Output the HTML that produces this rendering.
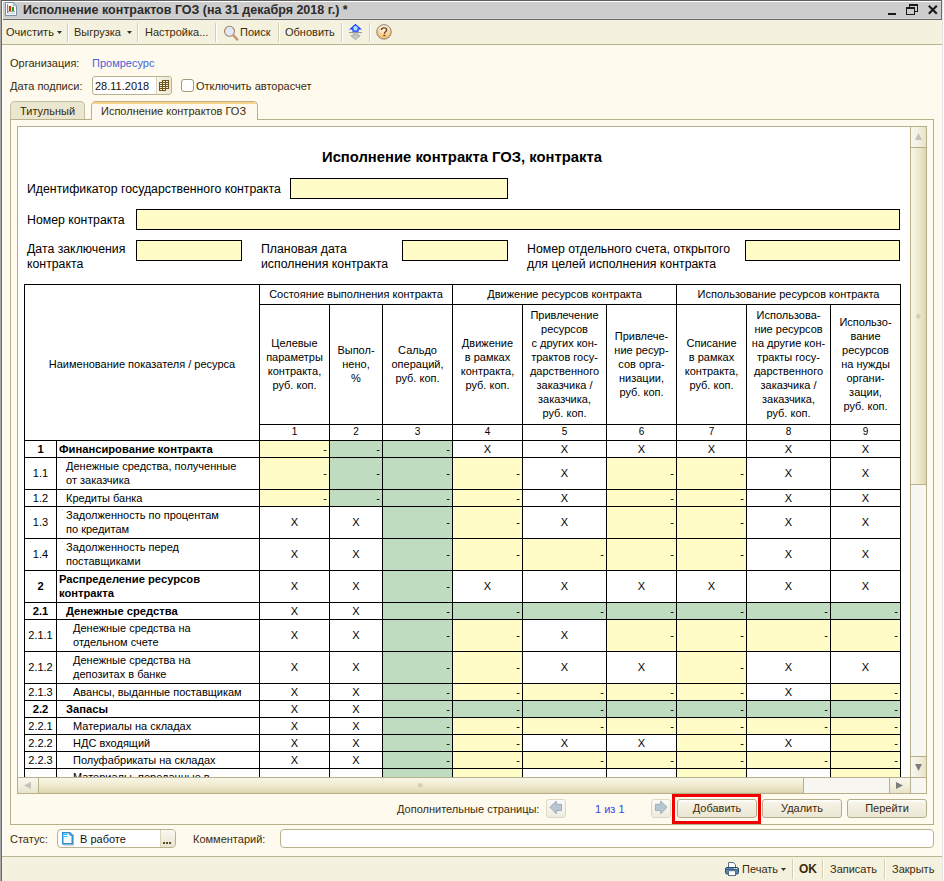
<!DOCTYPE html>
<html><head><meta charset="utf-8">
<style>
*{margin:0;padding:0;box-sizing:border-box}
html,body{width:944px;height:881px;overflow:hidden}
body{position:relative;background:#fefaee;font-family:"Liberation Sans",sans-serif;font-size:11px;color:#3a2c0c}
.a{position:absolute}
.t{position:absolute;white-space:nowrap;line-height:13px}
.sep{position:absolute;width:2px;border-left:1px solid #d5d0b5;border-right:1px solid #fff}
.btn{position:absolute;height:19px;border:1px solid #b4ad8c;border-radius:3px;background:linear-gradient(#fff 0,#fff 1px,#f6f3e8 2px,#ebe6d3);text-align:center;line-height:16px;color:#3a2c0c}
</style></head><body>
<!-- window frame -->
<div class="a" style="left:0;top:0;width:942px;height:1px;background:#5d5d5d"></div>
<div class="a" style="left:0;top:1px;width:942px;height:1px;background:#fff"></div>
<div class="a" style="left:0;top:2px;width:942px;height:17px;background:#cdcdcd"></div>
<div class="a" style="left:0;top:19px;width:942px;height:1px;background:#6a6a6a"></div>
<div class="a" style="left:941px;top:0;width:1px;height:20px;background:#6a6a6a"></div>
<div class="a" style="left:942px;top:0;width:1px;height:881px;background:#e6e6e6"></div>
<div class="a" style="left:943px;top:0;width:1px;height:881px;background:#fff"></div>
<div class="a" style="left:0;top:0;width:1px;height:881px;background:#a8a8a8"></div>
<div class="a" style="left:1px;top:0;width:1px;height:881px;background:#6a6a6a"></div>
<div class="a" style="left:2px;top:1px;width:1px;height:880px;background:#fffef6"></div>
<div class="a" style="left:3px;top:18px;width:938px;height:1px;background:#d6d6d6"></div>
<!-- title icon -->
<svg class="a" style="left:5px;top:2px" width="12" height="14" viewBox="0 0 12 14">
<path d="M0.5 0.5H8.2L11.5 3.8V13.5H0.5Z" fill="#fff" stroke="#7890a8"/>
<path d="M8.2 0.5V3.8H11.5Z" fill="#d4e2ee" stroke="#8aa0b4" stroke-width="0.8"/>
<rect x="2.2" y="2.2" width="0.9" height="9" fill="#666"/>
<rect x="3.9" y="4" width="2.2" height="5.3" fill="#e82a10"/>
<rect x="6.9" y="5" width="2.1" height="4.3" fill="#22a020"/>
<rect x="2" y="9.3" width="8" height="0.8" fill="#8a8a8a"/>
<rect x="2" y="10.9" width="8" height="1" fill="#bcd6ee"/></svg>
<div class="t" style="left:23px;top:3px;font-size:12.5px;font-weight:bold;color:#2b2b2b;line-height:14px">Исполнение контрактов ГОЗ (на 31 декабря 2018 г.) *</div>
<!-- window controls -->
<div class="a" style="left:888px;top:13px;width:8px;height:2px;background:#1a1a1a"></div>
<div class="a" style="left:909px;top:4px;width:9px;height:8px;border:1px solid #1a1a1a;border-top-width:2px"></div>
<div class="a" style="left:906px;top:7px;width:9px;height:8px;border:1px solid #1a1a1a;border-top-width:2px;background:#cdcdcd"></div>
<svg class="a" style="left:927px;top:4px" width="12" height="12" viewBox="0 0 12 12"><path d="M1.8 1.8L9.8 9.8M9.8 1.8L1.8 9.8" stroke="#1a1a1a" stroke-width="2.1"/></svg>
<!-- toolbar -->
<div class="a" style="left:2px;top:20px;width:940px;height:24px;background:#f4f1df"></div>
<div class="a" style="left:2px;top:44px;width:940px;height:1px;background:#b9b28e"></div>
<div class="t" style="left:6px;top:26px">Очистить</div>
<svg class="a" style="left:57px;top:31px" width="6" height="3"><path d="M0 0H5L2.5 3Z" fill="#333"/></svg>
<div class="sep" style="left:67px;top:23px;height:19px"></div>
<div class="t" style="left:74px;top:26px">Выгрузка</div>
<svg class="a" style="left:127px;top:31px" width="6" height="3"><path d="M0 0H5L2.5 3Z" fill="#333"/></svg>
<div class="sep" style="left:137px;top:23px;height:19px"></div>
<div class="t" style="left:145px;top:26px">Настройка...</div>
<div class="sep" style="left:215px;top:23px;height:19px"></div>
<svg class="a" style="left:222px;top:24px" width="17" height="17" viewBox="0 0 17 17">
<circle cx="7.5" cy="7.3" r="5" fill="#dfe9fa" stroke="#a8805e" stroke-width="1.1"/>
<path d="M11.6 11.6L15.2 15.3" stroke="#c39a78" stroke-width="2.6" stroke-linecap="round"/></svg>
<div class="t" style="left:240px;top:26px">Поиск</div>
<div class="sep" style="left:278px;top:23px;height:19px"></div>
<div class="t" style="left:285px;top:26px">Обновить</div>
<div class="sep" style="left:341px;top:23px;height:19px"></div>
<svg class="a" style="left:349px;top:23px" width="14" height="18" viewBox="0 0 14 18">
<path d="M6.5 1.6L11.3 5.9H9V8.2H4V5.9H1.7Z" fill="#a8e4ff" stroke="#1438ff" stroke-width="1.2" stroke-linejoin="miter"/>
<rect x="0" y="9" width="13" height="1.1" fill="#9a9a9a"/>
<path d="M4.2 10.8H8.8V12.6H11.2L6.5 16.8L1.8 12.6H4.2Z" fill="#c6c6c6" stroke="#9a9a9a" stroke-width="0.7"/></svg>
<div class="sep" style="left:369px;top:23px;height:19px"></div>
<svg class="a" style="left:376px;top:24px" width="16" height="16" viewBox="0 0 16 16">
<defs><radialGradient id="hg" cx="0.5" cy="0.32" r="0.75"><stop offset="0" stop-color="#fffbf2"/><stop offset="0.45" stop-color="#fbdcaa"/><stop offset="1" stop-color="#f2a43a"/></radialGradient></defs>
<circle cx="8" cy="7.9" r="7.3" fill="url(#hg)" stroke="#7c808a" stroke-width="0.9"/>
<path d="M5.4 6.1C5.4 4.5 6.6 3.9 8 3.9C9.6 3.9 10.6 4.8 10.6 6C10.6 7.4 9.1 7.8 8.6 8.9L8.4 9.9" fill="none" stroke="#6e4420" stroke-width="1.4"/>
<rect x="7.3" y="10.8" width="2.1" height="1.3" fill="#6e4420"/></svg>

<!-- header fields -->
<div class="t" style="left:10px;top:57px">Организация:</div>
<div class="t" style="left:92px;top:57px;color:#4464d8">Промресурс</div>
<div class="t" style="left:10px;top:80px">Дата подписи:</div>
<div class="a" style="left:92px;top:76px;width:80px;height:19px;border:1px solid #b9b28e;border-radius:3px;background:#fff"></div>
<div class="a" style="left:156px;top:77px;width:15px;height:17px;border-left:1px solid #d8d3bb;background:linear-gradient(90deg,#f7f5ea,#ebe6d2);border-radius:0 2px 2px 0"></div>
<svg class="a" style="left:159px;top:80px" width="10" height="11" viewBox="0 0 10 11"><path d="M3 0H10V9H7V11H0V2H3Z" fill="#6e5418"/><rect x="4" y="1" width="2" height="1" fill="#f4eedc"/><rect x="7" y="1" width="2" height="1" fill="#f4eedc"/><rect x="1" y="3" width="2" height="1" fill="#f4eedc"/><rect x="4" y="3" width="2" height="1" fill="#f4eedc"/><rect x="7" y="3" width="2" height="1" fill="#f4eedc"/><rect x="1" y="5" width="2" height="1" fill="#f4eedc"/><rect x="4" y="5" width="2" height="1" fill="#f4eedc"/><rect x="7" y="5" width="2" height="1" fill="#f4eedc"/><rect x="1" y="7" width="2" height="1" fill="#f4eedc"/><rect x="4" y="7" width="2" height="1" fill="#f4eedc"/><rect x="7" y="7" width="2" height="1" fill="#f4eedc"/><rect x="1" y="9" width="2" height="1" fill="#f4eedc"/><rect x="4" y="9" width="2" height="1" fill="#f4eedc"/></svg>
<div class="t" style="left:95px;top:80px;color:#111">28.11.2018</div>
<div class="a" style="left:181px;top:79px;width:13px;height:13px;border:1px solid #a09a78;border-radius:3px;background:#fff"></div>
<div class="t" style="left:196px;top:80px">Отключить авторасчет</div>

<!-- tabs -->
<div class="a" style="left:10px;top:101px;width:75px;height:19px;border:1px solid #c5bf9f;border-bottom:none;border-radius:5px 5px 0 0;background:#ebe6d0"></div>
<div class="t" style="left:20px;top:105px">Титульный</div>
<div class="a" style="left:91px;top:101px;width:167px;height:19px;border:1px solid #b8b08a;border-bottom:none;border-radius:5px 5px 0 0;background:#fdf9ee"></div>
<div class="a" style="left:93px;top:102px;width:163px;height:2px;background:#f8d48a;border-radius:3px 3px 0 0"></div>
<div class="t" style="left:101px;top:105px">Исполнение контрактов ГОЗ</div>

<!-- tab page -->
<div id="page" class="a" style="left:10px;top:119px;width:924px;height:706px;border:1px solid #b8b08a;border-top:none"></div>
<div class="a" style="left:10px;top:119px;width:82px;height:1px;background:#b8b08a"></div>
<div class="a" style="left:257px;top:119px;width:677px;height:1px;background:#b8b08a"></div>

<!-- spreadsheet frame -->
<div id="ss" class="a" style="left:17px;top:126px;width:910px;height:668px;border:1px solid #b8b08a;background:#fff;overflow:hidden">
<div class="a" style="left:-18px;top:-127px;width:944px;height:881px;color:#000">
<!--SS-->
<div class="t" style="left:322px;top:149px;font-size:14.8px;font-weight:bold;color:#000;line-height:17px">Исполнение контракта ГОЗ, контракта</div>
<div class="t" style="left:27px;top:182px;font-size:12.3px;color:#000;line-height:15px">Идентификатор государственного контракта</div>
<div class="a" style="left:290px;top:178px;width:218px;height:21px;border:1px solid #000;background:#fffcc8"></div>
<div class="t" style="left:27px;top:213px;font-size:12.3px;color:#000;line-height:15px">Номер контракта</div>
<div class="a" style="left:136px;top:209px;width:764px;height:21px;border:1px solid #000;background:#fffcc8"></div>
<div class="t" style="left:27px;top:242px;font-size:12.3px;color:#000;line-height:15px">Дата заключения<br>контракта</div>
<div class="a" style="left:136px;top:240px;width:106px;height:21px;border:1px solid #000;background:#fffcc8"></div>
<div class="t" style="left:261px;top:242px;font-size:12.3px;color:#000;line-height:15px">Плановая дата<br>исполнения контракта</div>
<div class="a" style="left:402px;top:240px;width:106px;height:21px;border:1px solid #000;background:#fffcc8"></div>
<div class="t" style="left:527px;top:242px;font-size:12.3px;color:#000;line-height:15px">Номер отдельного счета, открытого<br>для целей исполнения контракта</div>
<div class="a" style="left:745px;top:240px;width:155px;height:21px;border:1px solid #000;background:#fffcc8"></div>
<div class="a" style="left:260px;top:441px;width:69px;height:16px;background:#fffcc8"></div>
<div class="a" style="left:330px;top:441px;width:52px;height:16px;background:#c0dcc0"></div>
<div class="a" style="left:383px;top:441px;width:69px;height:16px;background:#c0dcc0"></div>
<div class="a" style="left:260px;top:458px;width:69px;height:31px;background:#fffcc8"></div>
<div class="a" style="left:330px;top:458px;width:52px;height:31px;background:#c0dcc0"></div>
<div class="a" style="left:383px;top:458px;width:69px;height:31px;background:#c0dcc0"></div>
<div class="a" style="left:453px;top:458px;width:69px;height:31px;background:#fffcc8"></div>
<div class="a" style="left:607px;top:458px;width:69px;height:31px;background:#fffcc8"></div>
<div class="a" style="left:677px;top:458px;width:69px;height:31px;background:#fffcc8"></div>
<div class="a" style="left:260px;top:490px;width:69px;height:16px;background:#fffcc8"></div>
<div class="a" style="left:330px;top:490px;width:52px;height:16px;background:#c0dcc0"></div>
<div class="a" style="left:383px;top:490px;width:69px;height:16px;background:#c0dcc0"></div>
<div class="a" style="left:453px;top:490px;width:69px;height:16px;background:#fffcc8"></div>
<div class="a" style="left:607px;top:490px;width:69px;height:16px;background:#fffcc8"></div>
<div class="a" style="left:677px;top:490px;width:69px;height:16px;background:#fffcc8"></div>
<div class="a" style="left:383px;top:507px;width:69px;height:31px;background:#c0dcc0"></div>
<div class="a" style="left:453px;top:507px;width:69px;height:31px;background:#fffcc8"></div>
<div class="a" style="left:607px;top:507px;width:69px;height:31px;background:#fffcc8"></div>
<div class="a" style="left:677px;top:507px;width:69px;height:31px;background:#fffcc8"></div>
<div class="a" style="left:383px;top:539px;width:69px;height:31px;background:#c0dcc0"></div>
<div class="a" style="left:453px;top:539px;width:69px;height:31px;background:#fffcc8"></div>
<div class="a" style="left:523px;top:539px;width:83px;height:31px;background:#fffcc8"></div>
<div class="a" style="left:607px;top:539px;width:69px;height:31px;background:#fffcc8"></div>
<div class="a" style="left:677px;top:539px;width:69px;height:31px;background:#fffcc8"></div>
<div class="a" style="left:383px;top:571px;width:69px;height:31px;background:#c0dcc0"></div>
<div class="a" style="left:383px;top:603px;width:69px;height:16px;background:#c0dcc0"></div>
<div class="a" style="left:453px;top:603px;width:69px;height:16px;background:#c0dcc0"></div>
<div class="a" style="left:523px;top:603px;width:83px;height:16px;background:#c0dcc0"></div>
<div class="a" style="left:607px;top:603px;width:69px;height:16px;background:#c0dcc0"></div>
<div class="a" style="left:677px;top:603px;width:69px;height:16px;background:#c0dcc0"></div>
<div class="a" style="left:747px;top:603px;width:83px;height:16px;background:#c0dcc0"></div>
<div class="a" style="left:831px;top:603px;width:69px;height:16px;background:#c0dcc0"></div>
<div class="a" style="left:383px;top:620px;width:69px;height:31px;background:#c0dcc0"></div>
<div class="a" style="left:453px;top:620px;width:69px;height:31px;background:#fffcc8"></div>
<div class="a" style="left:607px;top:620px;width:69px;height:31px;background:#fffcc8"></div>
<div class="a" style="left:677px;top:620px;width:69px;height:31px;background:#fffcc8"></div>
<div class="a" style="left:747px;top:620px;width:83px;height:31px;background:#fffcc8"></div>
<div class="a" style="left:831px;top:620px;width:69px;height:31px;background:#fffcc8"></div>
<div class="a" style="left:383px;top:652px;width:69px;height:31px;background:#c0dcc0"></div>
<div class="a" style="left:453px;top:652px;width:69px;height:31px;background:#fffcc8"></div>
<div class="a" style="left:677px;top:652px;width:69px;height:31px;background:#fffcc8"></div>
<div class="a" style="left:383px;top:684px;width:69px;height:16px;background:#c0dcc0"></div>
<div class="a" style="left:453px;top:684px;width:69px;height:16px;background:#fffcc8"></div>
<div class="a" style="left:523px;top:684px;width:83px;height:16px;background:#fffcc8"></div>
<div class="a" style="left:607px;top:684px;width:69px;height:16px;background:#fffcc8"></div>
<div class="a" style="left:677px;top:684px;width:69px;height:16px;background:#fffcc8"></div>
<div class="a" style="left:831px;top:684px;width:69px;height:16px;background:#fffcc8"></div>
<div class="a" style="left:383px;top:701px;width:69px;height:16px;background:#c0dcc0"></div>
<div class="a" style="left:453px;top:701px;width:69px;height:16px;background:#c0dcc0"></div>
<div class="a" style="left:523px;top:701px;width:83px;height:16px;background:#c0dcc0"></div>
<div class="a" style="left:607px;top:701px;width:69px;height:16px;background:#c0dcc0"></div>
<div class="a" style="left:677px;top:701px;width:69px;height:16px;background:#c0dcc0"></div>
<div class="a" style="left:747px;top:701px;width:83px;height:16px;background:#c0dcc0"></div>
<div class="a" style="left:831px;top:701px;width:69px;height:16px;background:#c0dcc0"></div>
<div class="a" style="left:383px;top:718px;width:69px;height:16px;background:#c0dcc0"></div>
<div class="a" style="left:453px;top:718px;width:69px;height:16px;background:#fffcc8"></div>
<div class="a" style="left:523px;top:718px;width:83px;height:16px;background:#fffcc8"></div>
<div class="a" style="left:607px;top:718px;width:69px;height:16px;background:#fffcc8"></div>
<div class="a" style="left:677px;top:718px;width:69px;height:16px;background:#fffcc8"></div>
<div class="a" style="left:747px;top:718px;width:83px;height:16px;background:#fffcc8"></div>
<div class="a" style="left:831px;top:718px;width:69px;height:16px;background:#fffcc8"></div>
<div class="a" style="left:383px;top:735px;width:69px;height:16px;background:#c0dcc0"></div>
<div class="a" style="left:453px;top:735px;width:69px;height:16px;background:#fffcc8"></div>
<div class="a" style="left:677px;top:735px;width:69px;height:16px;background:#fffcc8"></div>
<div class="a" style="left:831px;top:735px;width:69px;height:16px;background:#fffcc8"></div>
<div class="a" style="left:383px;top:752px;width:69px;height:16px;background:#c0dcc0"></div>
<div class="a" style="left:453px;top:752px;width:69px;height:16px;background:#fffcc8"></div>
<div class="a" style="left:523px;top:752px;width:83px;height:16px;background:#fffcc8"></div>
<div class="a" style="left:607px;top:752px;width:69px;height:16px;background:#fffcc8"></div>
<div class="a" style="left:677px;top:752px;width:69px;height:16px;background:#fffcc8"></div>
<div class="a" style="left:747px;top:752px;width:83px;height:16px;background:#fffcc8"></div>
<div class="a" style="left:831px;top:752px;width:69px;height:16px;background:#fffcc8"></div>
<div class="a" style="left:383px;top:769px;width:69px;height:31px;background:#c0dcc0"></div>
<div class="a" style="left:453px;top:769px;width:69px;height:31px;background:#fffcc8"></div>
<div class="a" style="left:677px;top:769px;width:69px;height:31px;background:#fffcc8"></div>
<div class="a" style="left:831px;top:769px;width:69px;height:31px;background:#fffcc8"></div>
<div class="a" style="left:24px;top:284px;width:877px;height:1px;background:#000"></div>
<div class="a" style="left:259px;top:304px;width:642px;height:1px;background:#000"></div>
<div class="a" style="left:259px;top:424px;width:642px;height:1px;background:#000"></div>
<div class="a" style="left:24px;top:440px;width:877px;height:1px;background:#000"></div>
<div class="a" style="left:24px;top:457px;width:877px;height:1px;background:#000"></div>
<div class="a" style="left:24px;top:489px;width:877px;height:1px;background:#000"></div>
<div class="a" style="left:24px;top:506px;width:877px;height:1px;background:#000"></div>
<div class="a" style="left:24px;top:538px;width:877px;height:1px;background:#000"></div>
<div class="a" style="left:24px;top:570px;width:877px;height:1px;background:#000"></div>
<div class="a" style="left:24px;top:602px;width:877px;height:1px;background:#000"></div>
<div class="a" style="left:24px;top:619px;width:877px;height:1px;background:#000"></div>
<div class="a" style="left:24px;top:651px;width:877px;height:1px;background:#000"></div>
<div class="a" style="left:24px;top:683px;width:877px;height:1px;background:#000"></div>
<div class="a" style="left:24px;top:700px;width:877px;height:1px;background:#000"></div>
<div class="a" style="left:24px;top:717px;width:877px;height:1px;background:#000"></div>
<div class="a" style="left:24px;top:734px;width:877px;height:1px;background:#000"></div>
<div class="a" style="left:24px;top:751px;width:877px;height:1px;background:#000"></div>
<div class="a" style="left:24px;top:768px;width:877px;height:1px;background:#000"></div>
<div class="a" style="left:24px;top:284px;width:1px;height:517px;background:#000"></div>
<div class="a" style="left:900px;top:284px;width:1px;height:517px;background:#000"></div>
<div class="a" style="left:259px;top:284px;width:1px;height:517px;background:#000"></div>
<div class="a" style="left:452px;top:284px;width:1px;height:517px;background:#000"></div>
<div class="a" style="left:676px;top:284px;width:1px;height:517px;background:#000"></div>
<div class="a" style="left:329px;top:304px;width:1px;height:497px;background:#000"></div>
<div class="a" style="left:382px;top:304px;width:1px;height:497px;background:#000"></div>
<div class="a" style="left:522px;top:304px;width:1px;height:497px;background:#000"></div>
<div class="a" style="left:606px;top:304px;width:1px;height:497px;background:#000"></div>
<div class="a" style="left:746px;top:304px;width:1px;height:497px;background:#000"></div>
<div class="a" style="left:830px;top:304px;width:1px;height:497px;background:#000"></div>
<div class="a" style="left:56px;top:440px;width:1px;height:361px;background:#000"></div>
<div class="a" style="left:25px;top:357.0px;width:234px;line-height:14px;text-align:center;">Наименование показателя / ресурса</div>
<div class="a" style="left:260px;top:287.0px;width:192px;line-height:14px;text-align:center;">Состояние выполнения контракта</div>
<div class="a" style="left:453px;top:287.0px;width:223px;line-height:14px;text-align:center;">Движение ресурсов контракта</div>
<div class="a" style="left:677px;top:287.0px;width:223px;line-height:14px;text-align:center;">Использование ресурсов контракта</div>
<div class="a" style="left:260px;top:336.0px;width:69px;line-height:14px;text-align:center;">Целевые<br>параметры<br>контракта,<br>руб. коп.</div>
<div class="a" style="left:260px;top:425.0px;width:69px;line-height:14px;text-align:center;font-size:10px">1</div>
<div class="a" style="left:330px;top:343.0px;width:52px;line-height:14px;text-align:center;">Выпол-<br>нено,<br>%</div>
<div class="a" style="left:330px;top:425.0px;width:52px;line-height:14px;text-align:center;font-size:10px">2</div>
<div class="a" style="left:383px;top:343.0px;width:69px;line-height:14px;text-align:center;">Сальдо<br>операций,<br>руб. коп.</div>
<div class="a" style="left:383px;top:425.0px;width:69px;line-height:14px;text-align:center;font-size:10px">3</div>
<div class="a" style="left:453px;top:336.0px;width:69px;line-height:14px;text-align:center;">Движение<br>в рамках<br>контракта,<br>руб. коп.</div>
<div class="a" style="left:453px;top:425.0px;width:69px;line-height:14px;text-align:center;font-size:10px">4</div>
<div class="a" style="left:523px;top:308.0px;width:83px;line-height:14px;text-align:center;">Привлечение<br>ресурсов<br>с других кон-<br>трактов госу-<br>дарственного<br>заказчика /<br>заказчика,<br>руб. коп.</div>
<div class="a" style="left:523px;top:425.0px;width:83px;line-height:14px;text-align:center;font-size:10px">5</div>
<div class="a" style="left:607px;top:329.0px;width:69px;line-height:14px;text-align:center;">Привлече-<br>ние ресур-<br>сов орга-<br>низации,<br>руб. коп.</div>
<div class="a" style="left:607px;top:425.0px;width:69px;line-height:14px;text-align:center;font-size:10px">6</div>
<div class="a" style="left:677px;top:336.0px;width:69px;line-height:14px;text-align:center;">Списание<br>в рамках<br>контракта,<br>руб. коп.</div>
<div class="a" style="left:677px;top:425.0px;width:69px;line-height:14px;text-align:center;font-size:10px">7</div>
<div class="a" style="left:747px;top:308.0px;width:83px;line-height:14px;text-align:center;">Использова-<br>ние ресурсов<br>на другие кон-<br>тракты госу-<br>дарственного<br>заказчика /<br>заказчика,<br>руб. коп.</div>
<div class="a" style="left:747px;top:425.0px;width:83px;line-height:14px;text-align:center;font-size:10px">8</div>
<div class="a" style="left:831px;top:315.0px;width:69px;line-height:14px;text-align:center;">Использо-<br>вание<br>ресурсов<br>на нужды<br>органи-<br>зации,<br>руб. коп.</div>
<div class="a" style="left:831px;top:425.0px;width:69px;line-height:14px;text-align:center;font-size:10px">9</div>
<div class="a" style="left:25px;top:441.5px;width:31px;line-height:14px;text-align:center;font-weight:bold;font-size:11.2px;">1</div>
<div class="a" style="left:59px;top:441.5px;line-height:14px;white-space:nowrap;font-weight:bold;font-size:11.2px;">Финансирование контракта</div>
<div class="a" style="left:260px;top:441.5px;width:67px;line-height:14px;text-align:right">-</div>
<div class="a" style="left:330px;top:441.5px;width:50px;line-height:14px;text-align:right">-</div>
<div class="a" style="left:383px;top:441.5px;width:67px;line-height:14px;text-align:right">-</div>
<div class="a" style="left:453px;top:441.5px;width:69px;line-height:14px;text-align:center;font-size:11px">X</div>
<div class="a" style="left:523px;top:441.5px;width:83px;line-height:14px;text-align:center;font-size:11px">X</div>
<div class="a" style="left:607px;top:441.5px;width:69px;line-height:14px;text-align:center;font-size:11px">X</div>
<div class="a" style="left:677px;top:441.5px;width:69px;line-height:14px;text-align:center;font-size:11px">X</div>
<div class="a" style="left:747px;top:441.5px;width:83px;line-height:14px;text-align:center;font-size:11px">X</div>
<div class="a" style="left:831px;top:441.5px;width:69px;line-height:14px;text-align:center;font-size:11px">X</div>
<div class="a" style="left:25px;top:466.0px;width:31px;line-height:14px;text-align:center;">1.1</div>
<div class="a" style="left:66px;top:459.0px;line-height:14px;white-space:nowrap;">Денежные средства, полученные<br>от заказчика</div>
<div class="a" style="left:260px;top:466.0px;width:67px;line-height:14px;text-align:right">-</div>
<div class="a" style="left:330px;top:466.0px;width:50px;line-height:14px;text-align:right">-</div>
<div class="a" style="left:383px;top:466.0px;width:67px;line-height:14px;text-align:right">-</div>
<div class="a" style="left:453px;top:466.0px;width:67px;line-height:14px;text-align:right">-</div>
<div class="a" style="left:523px;top:466.0px;width:83px;line-height:14px;text-align:center;font-size:11px">X</div>
<div class="a" style="left:607px;top:466.0px;width:67px;line-height:14px;text-align:right">-</div>
<div class="a" style="left:677px;top:466.0px;width:67px;line-height:14px;text-align:right">-</div>
<div class="a" style="left:747px;top:466.0px;width:83px;line-height:14px;text-align:center;font-size:11px">X</div>
<div class="a" style="left:831px;top:466.0px;width:69px;line-height:14px;text-align:center;font-size:11px">X</div>
<div class="a" style="left:25px;top:490.5px;width:31px;line-height:14px;text-align:center;">1.2</div>
<div class="a" style="left:66px;top:490.5px;line-height:14px;white-space:nowrap;">Кредиты банка</div>
<div class="a" style="left:260px;top:490.5px;width:67px;line-height:14px;text-align:right">-</div>
<div class="a" style="left:330px;top:490.5px;width:50px;line-height:14px;text-align:right">-</div>
<div class="a" style="left:383px;top:490.5px;width:67px;line-height:14px;text-align:right">-</div>
<div class="a" style="left:453px;top:490.5px;width:67px;line-height:14px;text-align:right">-</div>
<div class="a" style="left:523px;top:490.5px;width:83px;line-height:14px;text-align:center;font-size:11px">X</div>
<div class="a" style="left:607px;top:490.5px;width:67px;line-height:14px;text-align:right">-</div>
<div class="a" style="left:677px;top:490.5px;width:67px;line-height:14px;text-align:right">-</div>
<div class="a" style="left:747px;top:490.5px;width:83px;line-height:14px;text-align:center;font-size:11px">X</div>
<div class="a" style="left:831px;top:490.5px;width:69px;line-height:14px;text-align:center;font-size:11px">X</div>
<div class="a" style="left:25px;top:515.0px;width:31px;line-height:14px;text-align:center;">1.3</div>
<div class="a" style="left:66px;top:508.0px;line-height:14px;white-space:nowrap;">Задолженность по процентам<br>по кредитам</div>
<div class="a" style="left:260px;top:515.0px;width:69px;line-height:14px;text-align:center;font-size:11px">X</div>
<div class="a" style="left:330px;top:515.0px;width:52px;line-height:14px;text-align:center;font-size:11px">X</div>
<div class="a" style="left:383px;top:515.0px;width:67px;line-height:14px;text-align:right">-</div>
<div class="a" style="left:453px;top:515.0px;width:67px;line-height:14px;text-align:right">-</div>
<div class="a" style="left:523px;top:515.0px;width:83px;line-height:14px;text-align:center;font-size:11px">X</div>
<div class="a" style="left:607px;top:515.0px;width:67px;line-height:14px;text-align:right">-</div>
<div class="a" style="left:677px;top:515.0px;width:67px;line-height:14px;text-align:right">-</div>
<div class="a" style="left:747px;top:515.0px;width:83px;line-height:14px;text-align:center;font-size:11px">X</div>
<div class="a" style="left:831px;top:515.0px;width:69px;line-height:14px;text-align:center;font-size:11px">X</div>
<div class="a" style="left:25px;top:547.0px;width:31px;line-height:14px;text-align:center;">1.4</div>
<div class="a" style="left:66px;top:540.0px;line-height:14px;white-space:nowrap;">Задолженность перед<br>поставщиками</div>
<div class="a" style="left:260px;top:547.0px;width:69px;line-height:14px;text-align:center;font-size:11px">X</div>
<div class="a" style="left:330px;top:547.0px;width:52px;line-height:14px;text-align:center;font-size:11px">X</div>
<div class="a" style="left:383px;top:547.0px;width:67px;line-height:14px;text-align:right">-</div>
<div class="a" style="left:453px;top:547.0px;width:67px;line-height:14px;text-align:right">-</div>
<div class="a" style="left:523px;top:547.0px;width:81px;line-height:14px;text-align:right">-</div>
<div class="a" style="left:607px;top:547.0px;width:67px;line-height:14px;text-align:right">-</div>
<div class="a" style="left:677px;top:547.0px;width:67px;line-height:14px;text-align:right">-</div>
<div class="a" style="left:747px;top:547.0px;width:83px;line-height:14px;text-align:center;font-size:11px">X</div>
<div class="a" style="left:831px;top:547.0px;width:69px;line-height:14px;text-align:center;font-size:11px">X</div>
<div class="a" style="left:25px;top:579.0px;width:31px;line-height:14px;text-align:center;font-weight:bold;font-size:11.2px;">2</div>
<div class="a" style="left:59px;top:572.0px;line-height:14px;white-space:nowrap;font-weight:bold;font-size:11.2px;">Распределение ресурсов<br>контракта</div>
<div class="a" style="left:260px;top:579.0px;width:69px;line-height:14px;text-align:center;font-size:11px">X</div>
<div class="a" style="left:330px;top:579.0px;width:52px;line-height:14px;text-align:center;font-size:11px">X</div>
<div class="a" style="left:383px;top:579.0px;width:67px;line-height:14px;text-align:right">-</div>
<div class="a" style="left:453px;top:579.0px;width:69px;line-height:14px;text-align:center;font-size:11px">X</div>
<div class="a" style="left:523px;top:579.0px;width:83px;line-height:14px;text-align:center;font-size:11px">X</div>
<div class="a" style="left:607px;top:579.0px;width:69px;line-height:14px;text-align:center;font-size:11px">X</div>
<div class="a" style="left:677px;top:579.0px;width:69px;line-height:14px;text-align:center;font-size:11px">X</div>
<div class="a" style="left:747px;top:579.0px;width:83px;line-height:14px;text-align:center;font-size:11px">X</div>
<div class="a" style="left:831px;top:579.0px;width:69px;line-height:14px;text-align:center;font-size:11px">X</div>
<div class="a" style="left:25px;top:603.5px;width:31px;line-height:14px;text-align:center;font-weight:bold;font-size:11.2px;">2.1</div>
<div class="a" style="left:66px;top:603.5px;line-height:14px;white-space:nowrap;font-weight:bold;font-size:11.2px;">Денежные средства</div>
<div class="a" style="left:260px;top:603.5px;width:69px;line-height:14px;text-align:center;font-size:11px">X</div>
<div class="a" style="left:330px;top:603.5px;width:52px;line-height:14px;text-align:center;font-size:11px">X</div>
<div class="a" style="left:383px;top:603.5px;width:67px;line-height:14px;text-align:right">-</div>
<div class="a" style="left:453px;top:603.5px;width:67px;line-height:14px;text-align:right">-</div>
<div class="a" style="left:523px;top:603.5px;width:81px;line-height:14px;text-align:right">-</div>
<div class="a" style="left:607px;top:603.5px;width:67px;line-height:14px;text-align:right">-</div>
<div class="a" style="left:677px;top:603.5px;width:67px;line-height:14px;text-align:right">-</div>
<div class="a" style="left:747px;top:603.5px;width:81px;line-height:14px;text-align:right">-</div>
<div class="a" style="left:831px;top:603.5px;width:67px;line-height:14px;text-align:right">-</div>
<div class="a" style="left:25px;top:628.0px;width:31px;line-height:14px;text-align:center;">2.1.1</div>
<div class="a" style="left:73px;top:621.0px;line-height:14px;white-space:nowrap;">Денежные средства на<br>отдельном счете</div>
<div class="a" style="left:260px;top:628.0px;width:69px;line-height:14px;text-align:center;font-size:11px">X</div>
<div class="a" style="left:330px;top:628.0px;width:52px;line-height:14px;text-align:center;font-size:11px">X</div>
<div class="a" style="left:383px;top:628.0px;width:67px;line-height:14px;text-align:right">-</div>
<div class="a" style="left:453px;top:628.0px;width:67px;line-height:14px;text-align:right">-</div>
<div class="a" style="left:523px;top:628.0px;width:83px;line-height:14px;text-align:center;font-size:11px">X</div>
<div class="a" style="left:607px;top:628.0px;width:67px;line-height:14px;text-align:right">-</div>
<div class="a" style="left:677px;top:628.0px;width:67px;line-height:14px;text-align:right">-</div>
<div class="a" style="left:747px;top:628.0px;width:81px;line-height:14px;text-align:right">-</div>
<div class="a" style="left:831px;top:628.0px;width:67px;line-height:14px;text-align:right">-</div>
<div class="a" style="left:25px;top:660.0px;width:31px;line-height:14px;text-align:center;">2.1.2</div>
<div class="a" style="left:73px;top:653.0px;line-height:14px;white-space:nowrap;">Денежные средства на<br>депозитах в банке</div>
<div class="a" style="left:260px;top:660.0px;width:69px;line-height:14px;text-align:center;font-size:11px">X</div>
<div class="a" style="left:330px;top:660.0px;width:52px;line-height:14px;text-align:center;font-size:11px">X</div>
<div class="a" style="left:383px;top:660.0px;width:67px;line-height:14px;text-align:right">-</div>
<div class="a" style="left:453px;top:660.0px;width:67px;line-height:14px;text-align:right">-</div>
<div class="a" style="left:523px;top:660.0px;width:83px;line-height:14px;text-align:center;font-size:11px">X</div>
<div class="a" style="left:607px;top:660.0px;width:69px;line-height:14px;text-align:center;font-size:11px">X</div>
<div class="a" style="left:677px;top:660.0px;width:67px;line-height:14px;text-align:right">-</div>
<div class="a" style="left:747px;top:660.0px;width:83px;line-height:14px;text-align:center;font-size:11px">X</div>
<div class="a" style="left:831px;top:660.0px;width:69px;line-height:14px;text-align:center;font-size:11px">X</div>
<div class="a" style="left:25px;top:684.5px;width:31px;line-height:14px;text-align:center;">2.1.3</div>
<div class="a" style="left:73px;top:684.5px;line-height:14px;white-space:nowrap;">Авансы, выданные поставщикам</div>
<div class="a" style="left:260px;top:684.5px;width:69px;line-height:14px;text-align:center;font-size:11px">X</div>
<div class="a" style="left:330px;top:684.5px;width:52px;line-height:14px;text-align:center;font-size:11px">X</div>
<div class="a" style="left:383px;top:684.5px;width:67px;line-height:14px;text-align:right">-</div>
<div class="a" style="left:453px;top:684.5px;width:67px;line-height:14px;text-align:right">-</div>
<div class="a" style="left:523px;top:684.5px;width:81px;line-height:14px;text-align:right">-</div>
<div class="a" style="left:607px;top:684.5px;width:67px;line-height:14px;text-align:right">-</div>
<div class="a" style="left:677px;top:684.5px;width:67px;line-height:14px;text-align:right">-</div>
<div class="a" style="left:747px;top:684.5px;width:83px;line-height:14px;text-align:center;font-size:11px">X</div>
<div class="a" style="left:831px;top:684.5px;width:67px;line-height:14px;text-align:right">-</div>
<div class="a" style="left:25px;top:701.5px;width:31px;line-height:14px;text-align:center;font-weight:bold;font-size:11.2px;">2.2</div>
<div class="a" style="left:66px;top:701.5px;line-height:14px;white-space:nowrap;font-weight:bold;font-size:11.2px;">Запасы</div>
<div class="a" style="left:260px;top:701.5px;width:69px;line-height:14px;text-align:center;font-size:11px">X</div>
<div class="a" style="left:330px;top:701.5px;width:52px;line-height:14px;text-align:center;font-size:11px">X</div>
<div class="a" style="left:383px;top:701.5px;width:67px;line-height:14px;text-align:right">-</div>
<div class="a" style="left:453px;top:701.5px;width:67px;line-height:14px;text-align:right">-</div>
<div class="a" style="left:523px;top:701.5px;width:81px;line-height:14px;text-align:right">-</div>
<div class="a" style="left:607px;top:701.5px;width:67px;line-height:14px;text-align:right">-</div>
<div class="a" style="left:677px;top:701.5px;width:67px;line-height:14px;text-align:right">-</div>
<div class="a" style="left:747px;top:701.5px;width:81px;line-height:14px;text-align:right">-</div>
<div class="a" style="left:831px;top:701.5px;width:67px;line-height:14px;text-align:right">-</div>
<div class="a" style="left:25px;top:718.5px;width:31px;line-height:14px;text-align:center;">2.2.1</div>
<div class="a" style="left:73px;top:718.5px;line-height:14px;white-space:nowrap;">Материалы на складах</div>
<div class="a" style="left:260px;top:718.5px;width:69px;line-height:14px;text-align:center;font-size:11px">X</div>
<div class="a" style="left:330px;top:718.5px;width:52px;line-height:14px;text-align:center;font-size:11px">X</div>
<div class="a" style="left:383px;top:718.5px;width:67px;line-height:14px;text-align:right">-</div>
<div class="a" style="left:453px;top:718.5px;width:67px;line-height:14px;text-align:right">-</div>
<div class="a" style="left:523px;top:718.5px;width:81px;line-height:14px;text-align:right">-</div>
<div class="a" style="left:607px;top:718.5px;width:67px;line-height:14px;text-align:right">-</div>
<div class="a" style="left:677px;top:718.5px;width:67px;line-height:14px;text-align:right">-</div>
<div class="a" style="left:747px;top:718.5px;width:81px;line-height:14px;text-align:right">-</div>
<div class="a" style="left:831px;top:718.5px;width:67px;line-height:14px;text-align:right">-</div>
<div class="a" style="left:25px;top:735.5px;width:31px;line-height:14px;text-align:center;">2.2.2</div>
<div class="a" style="left:73px;top:735.5px;line-height:14px;white-space:nowrap;">НДС входящий</div>
<div class="a" style="left:260px;top:735.5px;width:69px;line-height:14px;text-align:center;font-size:11px">X</div>
<div class="a" style="left:330px;top:735.5px;width:52px;line-height:14px;text-align:center;font-size:11px">X</div>
<div class="a" style="left:383px;top:735.5px;width:67px;line-height:14px;text-align:right">-</div>
<div class="a" style="left:453px;top:735.5px;width:67px;line-height:14px;text-align:right">-</div>
<div class="a" style="left:523px;top:735.5px;width:83px;line-height:14px;text-align:center;font-size:11px">X</div>
<div class="a" style="left:607px;top:735.5px;width:69px;line-height:14px;text-align:center;font-size:11px">X</div>
<div class="a" style="left:677px;top:735.5px;width:67px;line-height:14px;text-align:right">-</div>
<div class="a" style="left:747px;top:735.5px;width:83px;line-height:14px;text-align:center;font-size:11px">X</div>
<div class="a" style="left:831px;top:735.5px;width:67px;line-height:14px;text-align:right">-</div>
<div class="a" style="left:25px;top:752.5px;width:31px;line-height:14px;text-align:center;">2.2.3</div>
<div class="a" style="left:73px;top:752.5px;line-height:14px;white-space:nowrap;">Полуфабрикаты на складах</div>
<div class="a" style="left:260px;top:752.5px;width:69px;line-height:14px;text-align:center;font-size:11px">X</div>
<div class="a" style="left:330px;top:752.5px;width:52px;line-height:14px;text-align:center;font-size:11px">X</div>
<div class="a" style="left:383px;top:752.5px;width:67px;line-height:14px;text-align:right">-</div>
<div class="a" style="left:453px;top:752.5px;width:67px;line-height:14px;text-align:right">-</div>
<div class="a" style="left:523px;top:752.5px;width:81px;line-height:14px;text-align:right">-</div>
<div class="a" style="left:607px;top:752.5px;width:67px;line-height:14px;text-align:right">-</div>
<div class="a" style="left:677px;top:752.5px;width:67px;line-height:14px;text-align:right">-</div>
<div class="a" style="left:747px;top:752.5px;width:81px;line-height:14px;text-align:right">-</div>
<div class="a" style="left:831px;top:752.5px;width:67px;line-height:14px;text-align:right">-</div>
<div class="a" style="left:73px;top:770.0px;line-height:14px;white-space:nowrap;">Материалы, переданные в<br>переработку</div>
<div class="a" style="left:383px;top:777.0px;width:67px;line-height:14px;text-align:right">-</div>
<div class="a" style="left:453px;top:777.0px;width:67px;line-height:14px;text-align:right">-</div>
<div class="a" style="left:677px;top:777.0px;width:67px;line-height:14px;text-align:right">-</div>
<div class="a" style="left:831px;top:777.0px;width:67px;line-height:14px;text-align:right">-</div>
<!--/SS-->
</div>
</div>
<!-- scrollbars -->
<div class="a" style="left:910px;top:127px;width:16px;height:650px;background:#f8f6f0;border-left:1px solid #b8b08a"></div>
<div class="a" style="left:911px;top:127px;width:15px;height:21px;border-bottom:1px solid #b8b08a;background:linear-gradient(90deg,#f9f7ee,#f1eddc 60%,#e8e2c8)"></div>
<svg class="a" style="left:914px;top:132px" width="9" height="9" viewBox="0 0 9 9"><path d="M4.5 1L8 8H1Z" fill="#c4c2b8"/></svg>
<div class="a" style="left:911px;top:148px;width:15px;height:337px;border-bottom:1px solid #b8b08a;background:linear-gradient(90deg,#f8f6e9,#f0eacd 50%,#e2dbb8 90%,#d8d0a8)"></div>
<div class="a" style="left:916px;top:314px;width:5px;height:5px;border-radius:50%;background:radial-gradient(circle at 40% 40%,#c8c4b0,#ebe6d0)"></div>
<div class="a" style="left:911px;top:756px;width:15px;height:21px;border-top:1px solid #b8b08a;background:linear-gradient(90deg,#f9f7ee,#f1eddc 60%,#e8e2c8)"></div>
<svg class="a" style="left:914px;top:763px" width="9" height="9" viewBox="0 0 9 9"><path d="M1 1H8L4.5 8Z" fill="#7c7c7c"/></svg>
<div class="a" style="left:18px;top:777px;width:908px;height:16px;background:#f8f6f0;border-top:1px solid #b8b08a"></div>
<div class="a" style="left:18px;top:778px;width:21px;height:15px;border-right:1px solid #b8b08a;background:linear-gradient(#f9f7ee,#f1eddc 60%,#e8e2c8)"></div>
<svg class="a" style="left:23px;top:781px" width="9" height="9" viewBox="0 0 9 9"><path d="M1 4.5L8 1V8Z" fill="#c4c2b8"/></svg>
<div class="a" style="left:39px;top:778px;width:765px;height:15px;border-right:1px solid #b8b08a;background:linear-gradient(#f8f6e9,#f0eacd 50%,#e2dbb8 90%,#d8d0a8)"></div>
<div class="a" style="left:418px;top:783px;width:5px;height:5px;border-radius:50%;background:radial-gradient(circle at 40% 40%,#c8c4b0,#ebe6d0)"></div>
<div class="a" style="left:889px;top:778px;width:22px;height:15px;border-left:1px solid #b8b08a;border-right:1px solid #b8b08a;background:linear-gradient(#f9f7ee,#f1eddc 60%,#e8e2c8)"></div>
<svg class="a" style="left:895px;top:781px" width="9" height="9" viewBox="0 0 9 9"><path d="M8 4.5L1 1V8Z" fill="#7c7c7c"/></svg>


<!-- pagination -->
<div class="t" style="left:397px;top:803px">Дополнительные страницы:</div>
<div class="a" style="left:546px;top:799px;width:20px;height:19px;border:1px solid #ddd8c4;border-radius:3px;background:linear-gradient(#fbfaf5,#efecdf)"></div>
<svg class="a" style="left:549px;top:800px" width="14" height="16" viewBox="0 0 14 16"><path d="M1 7.3L7.3 1V4.3H12.5V10.5H7.3V13.8Z" fill="#b8c6d2" stroke="#98a8b8" stroke-width="0.9" stroke-linejoin="round"/></svg>
<div class="t" style="left:595px;top:803px;color:#3a46e6">1 из 1</div>
<div class="a" style="left:651px;top:799px;width:20px;height:19px;border:1px solid #ddd8c4;border-radius:3px;background:linear-gradient(#fbfaf5,#efecdf)"></div>
<svg class="a" style="left:654px;top:800px" width="14" height="16" viewBox="0 0 14 16"><path d="M13 7.3L6.7 1V4.3H1.5V10.5H6.7V13.8Z" fill="#b8c6d2" stroke="#98a8b8" stroke-width="0.9" stroke-linejoin="round"/></svg>
<div class="a" style="left:672px;top:794px;width:89px;height:30px;border:3px solid #f20000"></div>
<div class="btn" style="left:677px;top:799px;width:80px">Добавить</div>
<div class="btn" style="left:762px;top:799px;width:80px">Удалить</div>
<div class="btn" style="left:847px;top:799px;width:80px">Перейти</div>

<!-- status -->
<div class="t" style="left:10px;top:833px">Статус:</div>
<div class="a" style="left:57px;top:829px;width:119px;height:19px;border:1px solid #b9b28e;border-radius:4px;background:#fff"></div>
<div class="a" style="left:160px;top:830px;width:15px;height:17px;border-left:1px solid #d8d3bb;background:linear-gradient(#f9f8f1,#e9e4d0);border-radius:0 3px 3px 0"></div>
<div class="a" style="left:163px;top:842px;width:2px;height:2px;background:#5a4a2a"></div><div class="a" style="left:166px;top:842px;width:2px;height:2px;background:#5a4a2a"></div><div class="a" style="left:169px;top:842px;width:2px;height:2px;background:#5a4a2a"></div>
<svg class="a" style="left:62px;top:832px" width="13" height="14" viewBox="0 0 13 14">
<rect x="11" y="2" width="1" height="11" fill="#b8b8b0"/><rect x="1" y="12.5" width="11" height="1" fill="#b8b8b0"/>
<path d="M0.75 0.75H7.8L10.25 3.2V11.75H0.75Z" fill="#fff" stroke="#2e90d2" stroke-width="1.5"/>
<path d="M7.8 0.75V3.2H10.25" fill="none" stroke="#2e90d2" stroke-width="1"/>
<path d="M2 2.5H5.5M2 4.5H5.5" stroke="#1cc4ff" stroke-width="1"/></svg>
<div class="t" style="left:80px;top:833px;color:#111">В работе</div>
<div class="t" style="left:193px;top:833px">Комментарий:</div>
<div class="a" style="left:280px;top:829px;width:654px;height:19px;border:1px solid #b9b28e;border-radius:4px;background:#fff"></div>

<!-- bottom bar -->
<div class="a" style="left:2px;top:856px;width:940px;height:1px;background:#bcb593"></div>
<div class="a" style="left:2px;top:857px;width:940px;height:24px;background:#f4f1df"></div>
<svg class="a" style="left:724px;top:861px" width="16" height="16" viewBox="0 0 16 16">
<path d="M4.5 1.5H9.3L11.5 3.7V6.5H4.5Z" fill="#fff" stroke="#5a7088"/>
<rect x="1.5" y="6.5" width="13" height="6.5" rx="1.5" fill="#5a86b6" stroke="#2c4c6e"/>
<rect x="2.5" y="8.2" width="11" height="0.9" fill="#3a5a7c"/>
<rect x="10.2" y="7" width="1.2" height="1" fill="#fff"/><rect x="12" y="7" width="1.2" height="1" fill="#fff"/>
<rect x="4.5" y="9.7" width="7" height="4.8" fill="#fff" stroke="#5a7088"/></svg>
<div class="t" style="left:742px;top:863px">Печать</div>
<svg class="a" style="left:781px;top:868px" width="6" height="3"><path d="M0 0H5L2.5 3Z" fill="#333"/></svg>
<div class="sep" style="left:792px;top:859px;height:20px"></div>
<div class="t" style="left:799px;top:863px;font-weight:bold;font-size:12px">OK</div>
<div class="sep" style="left:822px;top:859px;height:20px"></div>
<div class="t" style="left:830px;top:863px">Записать</div>
<div class="sep" style="left:884px;top:859px;height:20px"></div>
<div class="t" style="left:892px;top:863px">Закрыть</div>
</body></html>
